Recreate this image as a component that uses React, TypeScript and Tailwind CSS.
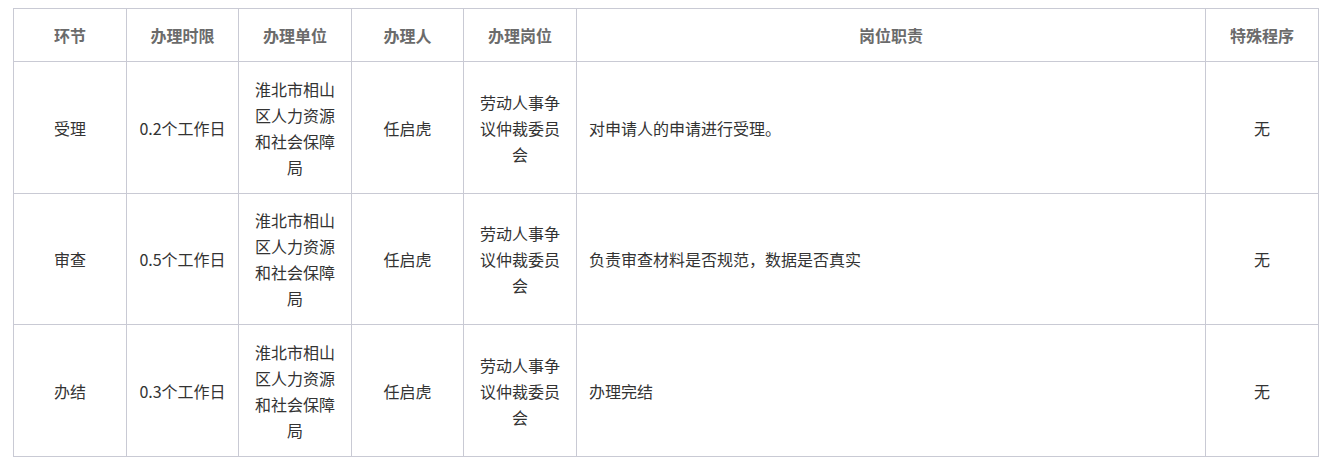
const rows = [
  { step: '受理', time: '0.2个工作日', duty: '对申请人的申请进行受理。' },
  { step: '审查', time: '0.5个工作日', duty: '负责审查材料是否规范，数据是否真实' },
  { step: '办结', time: '0.3个工作日', duty: '办理完结' },
]

const headers = ['环节', '办理时限', '办理单位', '办理人', '办理岗位', '岗位职责', '特殊程序']
const widths = ['w-[113px]', 'w-[112px]', 'w-[113px]', 'w-[112px]', 'w-[113px]', 'w-[629px]', 'w-[113px]']

export default function App() {
  return (
    <div
      className="bg-white pl-[13px] pt-[8px] w-[1334px] h-[474px]"
      style={{ fontFamily: '"Microsoft YaHei", "Noto Sans CJK SC", sans-serif' }}
    >
      <table className="table-fixed border-collapse w-[1305px] text-[16px] leading-[26px]">
        <colgroup>
          {widths.map((w, i) => (
            <col key={i} className={w} />
          ))}
        </colgroup>
        <thead>
          <tr className="h-[53px]">
            {headers.map((h) => (
              <th key={h} className="border border-[#c9cad4] px-3 text-center font-bold text-[#6b6b6b]">
                {h}
              </th>
            ))}
          </tr>
        </thead>
        <tbody>
          {rows.map((r, i) => (
            <tr key={r.step} className={i === 1 ? 'h-[131px]' : 'h-[132px]'}>
              <td className="border border-[#c9cad4] px-3 text-center text-[#333]">{r.step}</td>
              <td className="border border-[#c9cad4] px-3 text-center text-[#333]">{r.time}</td>
              <td className="border border-[#c9cad4] px-3 text-center text-[#333]">淮北市相山区人力资源和社会保障局</td>
              <td className="border border-[#c9cad4] px-3 text-center text-[#333]">任启虎</td>
              <td className="border border-[#c9cad4] px-3 text-center text-[#333]">劳动人事争议仲裁委员会</td>
              <td className="border border-[#c9cad4] px-3 text-left text-[#333]">{r.duty}</td>
              <td className="border border-[#c9cad4] px-3 text-center text-[#333]">无</td>
            </tr>
          ))}
        </tbody>
      </table>
    </div>
  )
}
